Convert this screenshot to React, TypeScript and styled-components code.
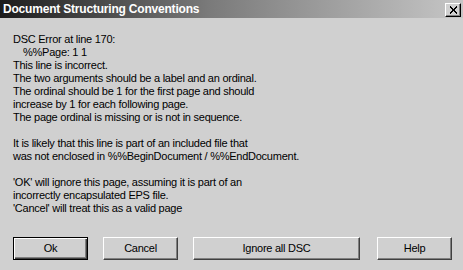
import React from "react";
import styled, { createGlobalStyle } from "styled-components";

const Global = createGlobalStyle`
  html, body {
    margin: 0;
    padding: 0;
    width: 463px;
    height: 270px;
    overflow: hidden;
    background: #d0d0d0;
  }
  * { box-sizing: border-box; }
`;

const Dialog = styled.div`
  width: 463px;
  height: 270px;
  background: #d0d0d0;
  display: flex;
  flex-direction: column;
  font-family: "Liberation Sans", Arial, sans-serif;
  font-size: 11px;
  letter-spacing: -0.25px;
  color: #000;
`;

const TitleBar = styled.div`
  height: 18px;
  display: flex;
  align-items: center;
  justify-content: space-between;
  padding: 0 2px 0 3px;
  background: linear-gradient(to right, #1c1c1c 0%, #7a7a7a 45%, #c6c6c6 100%);
`;

const TitleText = styled.span`
  color: #fff;
  font-weight: bold;
  font-size: 12px;
  letter-spacing: -0.2px;
  line-height: 18px;
`;

const CloseButton = styled.div`
  width: 16px;
  height: 14px;
  margin-top: 1px;
  background: #d0d0d0;
  border-top: 1px solid #fff;
  border-left: 1px solid #fff;
  border-right: 1px solid #000;
  border-bottom: 1px solid #000;
  box-shadow: inset -1px -1px 0 #808080;
  display: flex;
  align-items: center;
  justify-content: center;
`;

const Body = styled.div`
  padding: 15px 13px 0 13px;
`;

const Line = styled.div<{ $indent?: number }>`
  height: 13px;
  line-height: 13px;
  white-space: pre;
  padding-left: ${(p) => p.$indent ?? 0}px;
`;

const Blank = styled.div`
  height: 13px;
`;

const ButtonRow = styled.div`
  display: flex;
  padding-left: 13px;
  margin-top: 22px;
`;

const Button = styled.div<{ $w: number; $gap: number; $default?: boolean }>`
  width: ${(p) => p.$w}px;
  height: 23px;
  margin-right: ${(p) => p.$gap}px;
  display: flex;
  align-items: center;
  justify-content: center;
  background: #d0d0d0;
  line-height: 13px;
  border: 1px solid;
  border-color: ${(p) => (p.$default ? "#000" : "#fff #404040 #404040 #fff")};
  box-shadow: ${(p) =>
    p.$default
      ? "inset 1px 1px 0 #fff, inset -1px -1px 0 #404040, inset -2px -2px 0 #808080"
      : "inset -1px -1px 0 #808080"};
`;

export default function App() {
  return (
    <>
      <Global />
      <Dialog>
        <TitleBar>
          <TitleText>Document Structuring Conventions</TitleText>
          <CloseButton>
            <svg width="9" height="8" viewBox="0 0 9 8" shapeRendering="crispEdges">
              <path d="M1 0.5 L8 7.5 M8 0.5 L1 7.5" stroke="#000" strokeWidth="2" />
            </svg>
          </CloseButton>
        </TitleBar>
        <Body>
          <Line>DSC Error at line 170:</Line>
          <Line $indent={10}>%%Page: 1 1</Line>
          <Line>This line is incorrect.</Line>
          <Line>The two arguments should be a label and an ordinal.</Line>
          <Line>The ordinal should be 1 for the first page and should</Line>
          <Line>increase by 1 for each following page.</Line>
          <Line>The page ordinal is missing or is not in sequence.</Line>
          <Blank />
          <Line>It is likely that this line is part of an included file that</Line>
          <Line>was not enclosed in %%BeginDocument / %%EndDocument.</Line>
          <Blank />
          <Line>'OK' will ignore this page, assuming it is part of an</Line>
          <Line>incorrectly encapsulated EPS file.</Line>
          <Line>'Cancel' will treat this as a valid page</Line>
        </Body>
        <ButtonRow>
          <Button $w={75} $gap={15} $default>Ok</Button>
          <Button $w={75} $gap={15}>Cancel</Button>
          <Button $w={167} $gap={17}>Ignore all DSC</Button>
          <Button $w={75} $gap={0}>Help</Button>
        </ButtonRow>
      </Dialog>
    </>
  );
}
